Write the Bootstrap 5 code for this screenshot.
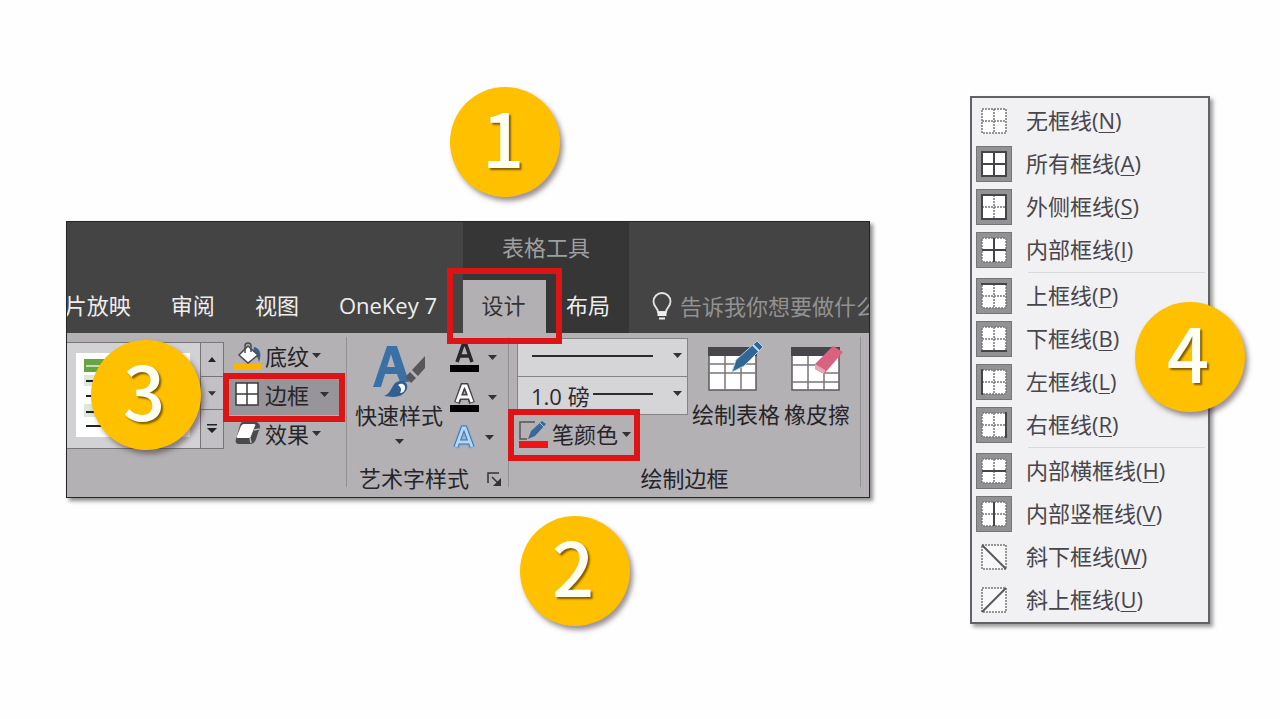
<!DOCTYPE html>
<html lang="zh-CN">
<head>
<meta charset="utf-8">
<meta name="viewport" content="width=device-width, initial-scale=1">
<title>表格工具 · 边框设置</title>
<link href="https://cdn.jsdelivr.net/npm/bootstrap@5.3.0/dist/css/bootstrap.min.css" rel="stylesheet">
<style>
  body { background: #fefefe; color: #262428; font: 22px/32px "Open Sans", "Noto Sans CJK SC", sans-serif; }
  button { color: inherit; background: none; border: 0; padding: 0; line-height: 32px; white-space: nowrap; }
  svg { display: block; flex: none; }
  .stage { padding: 87px 70px 87px 66px; gap: 100px; }

  /* numbered steps */
  .step { width: 110px; height: 110px; border-radius: 50%; background: #ffc000; color: #fffff4;
    font: 500 74px/98px "Noto Sans CJK SC", sans-serif; text-align: center; padding-right: 4px;
    box-shadow: 3px 4px 5px rgba(60,40,50,.5); text-shadow: 2px 2px 2px rgba(90,60,0,.75); z-index: 5; }
  .step-1 { margin: 0 0 24px 384px; }
  .step-2 { margin: 18px 0 0 454px; }
  .step-3 { left: 24px; top: 7px; }
  .step-4 { right: -35px; top: 206px; }
  .marked::after { content: ""; position: absolute; border: 6px solid #dc1416; inset: var(--around); z-index: 3; pointer-events: none; }

  /* ribbon */
  .ribbon { border: 1px solid #252525; box-shadow: 3px 3px 4px rgba(0,0,0,.45); overflow: hidden; }
  .tabs { background: #444; color: #eee; height: 111px; z-index: 2; }
  .tabs-main { gap: 40px; padding: 0 26px 12px 0; }
  .tabs-context { background: #363636; width: 166px; }
  .context-title { color: #a09fa0; line-height: 50px; }
  .tab-on { width: 83px; height: 53px; padding: 0 2px 4px 0; background: #b3b0b4; color: #333; --around: -12px -16px -11px -16px; }
  .tab-next { padding: 0 0 4px 20px; }
  .ask { color: #929292; padding: 0 0 11px 23px; gap: 8px; }
  .tools { background: #b3b1b4; height: 164px; }
  .group { border-right: 1px solid #929094; margin: 4px 0 10px; }
  .group-name { position: absolute; bottom: -7px; }
  .wordart .group-name { left: 12px; }

  .gallery { border: 1px solid #77757a; border-left: 0; height: 107px; background: #d2d1d4; margin-top: 5px; }
  .preview { width: 133px; padding: 10px 10px 11px 9px; }
  .spin { width: 23px; border-left: 1px solid #77757a; background: #c2c0c4; }
  .spin button + button { border-top: 1px solid #77757a; }
  .styles { padding: 0 0 0 10px; width: 122px; }
  .styles button { height: 39px; gap: 3px; padding-bottom: 2px; }
  .framed { background: #979599; --around: -3px -13px -7px -11px; z-index: 2; width: 98px; }
  .framed::before { content: ""; position: absolute; inset: 0 -9px 0 -7px; background: #979599; z-index: -1; }
  .wordart { width: 162px; }
  .quick { width: 86px; margin-left: 9px; }
  .letters { margin-left: 8px; }
  .letters button { height: 40px; gap: 9px; }
  .launcher { position: absolute; right: 6px; bottom: 0; }
  .draw { padding-left: 8px; width: 352px; }
  .combos { width: 171px; padding-top: 1px; }
  .combo { height: 39px; }
  .combo + .combo { margin-top: -1px; }
  .combo select { appearance: none; width: 100%; height: 100%; border: 1px solid #858388; border-radius: 0; background: #d5d4d7; color: #2c2a2e; padding: 0 0 0 13px; line-height: 32px; }
  .combo .drop { position: absolute; right: 6px; top: 15px; pointer-events: none; }
  .combo .rule { position: absolute; right: 35px; top: 17px; height: 2px; background: #2c2a2e; pointer-events: none; }
  .rule-long { width: 121px; }
  .rule-short { width: 60px; }
  .pen { height: 40px; margin: 1px 0 0 2px; padding-bottom: 4px; gap: 4px; width: 116px; --around: -7px -5px -5px -11px; }
  .big { padding-top: 4px; height: 94px; }
  .big svg { height: 52px; margin-bottom: 5px; }

  /* border menu */
  .borders-wrap { margin-top: 9px; width: 240px; flex: none; }
  .borders { background: #f1f0f2; border: 2px solid #626165; padding: 1px 0 1px; color: #48464b; box-shadow: 3px 3px 4px rgba(0,0,0,.4); }
  .borders button { display: flex; align-items: center; gap: 14px; height: 43px; width: 100%; padding-left: 4px; }
  .borders button > span:last-child { padding-bottom: 2px; }
  .borders hr { margin: 1px 3px 1px 56px; border: 0; height: 1px; background: #dad8dc; opacity: 1; }
  .tile { width: 36px; height: 36px; border: 1px solid transparent; padding: 4px; }
  .on .tile { background: #929193; border-color: #757477; }
  .borders u { text-underline-offset: 3px; text-decoration-thickness: 1px; }
</style>
</head>
<body>
<svg width="0" height="0" class="position-absolute" aria-hidden="true">
  <symbol id="drop" viewBox="0 0 9 5"><path d="M0 0h9L4.500 5z" fill="#333136"/></symbol>
  <symbol id="grid" viewBox="0 0 26 26"><path d="M1 1h24v24H1z" fill="#fff"/><path d="M1 1h24v24H1zM13 1v24M1 13h24" fill="none" stroke="#77757a" stroke-width="1.500" stroke-dasharray="2 1"/></symbol>
  <symbol id="sheet" viewBox="0 0 50 46"><path d="M1 1h47v42H1z" fill="#fff" stroke="#5d5b60" stroke-width="1.500"/><path d="M0 0h49v9H0z" fill="#47464a"/></symbol>
</svg>

<main class="stage d-flex align-items-start">
  <section class="flex-grow-1" style="min-width:0">
    <div class="step step-1">1</div>

    <div class="ribbon position-relative">
      <nav class="tabs d-flex position-relative" aria-label="功能区">
        <div class="tabs-main d-flex flex-grow-1 align-items-end justify-content-end overflow-hidden" style="width:0">
          <button>片放映</button><button>审阅</button><button>视图</button><button>OneKey 7</button>
        </div>
        <div class="tabs-context d-flex flex-column justify-content-between flex-shrink-0">
          <div class="context-title text-center">表格工具</div>
          <div class="d-flex align-items-center">
            <button class="tab-on marked position-relative">设计</button>
            <button class="tab-next">布局</button>
          </div>
        </div>
        <button class="ask d-flex align-items-end overflow-hidden" style="width:240px">
          <svg width="20" height="30" viewBox="0 0 20 30"><path d="M6 20c0-4-4.500-5-4.500-10.500a8.500 8.500 0 0 1 17 0C18.500 15 14 16 14 20z" fill="none" stroke="#e4e4e4" stroke-width="1.800"/><path d="M5.500 20h9v4h-9zM7 25.500h6v2H7z" fill="#eee"/></svg>
          <span>告诉我你想要做什么</span>
        </button>
      </nav>

      <div class="tools d-flex position-relative">
        <div class="step step-3 position-absolute">3</div>
        <div class="group d-flex">
          <div class="gallery d-flex">
            <div class="preview">
              <svg width="114" height="84" viewBox="0 0 114 84" aria-label="表格样式"><path d="M0 0h114v84H0z" fill="#fff"/><path d="M8 6h98v13H8z" fill="#67a53f"/><path d="M8 22h98v11H8zM8 51h98v13H8z" fill="#dce8d8"/><path d="M10 13h94" stroke="#e6f2df" stroke-width="1.500"/><path d="M10 28h16M32 28h16M54 28h16M76 28h16M10 43h16M32 43h16M54 43h16M76 43h16M10 59h16M32 59h16M54 59h16M76 59h16M10 73h16M32 73h16M54 73h16M76 73h16" stroke="#222" stroke-width="2"/></svg>
            </div>
            <div class="spin d-flex flex-column">
              <button class="flex-fill d-flex align-items-center justify-content-center" aria-label="上一行"><svg width="8" height="5" viewBox="0 0 8 5"><path d="M0 5h8L4 0z" fill="#222"/></svg></button>
              <button class="flex-fill d-flex align-items-center justify-content-center" aria-label="下一行"><svg width="8" height="5"><use href="#drop"/></svg></button>
              <button class="flex-fill d-flex align-items-center justify-content-center" aria-label="更多"><svg width="10" height="10" viewBox="0 0 10 10"><path d="M0 0h10v1.500H0zM0 4h10L5 9z" fill="#222"/></svg></button>
            </div>
          </div>
          <div class="styles d-flex flex-column align-items-start">
            <button class="d-flex align-items-center">
              <svg width="28" height="28" viewBox="0 0 28 28"><path d="M0 22h27v6H0z" fill="#ffb400"/><path d="M20 5c6 1 8 7 5 15-1-4-2-7-6-8z" fill="#3b6188"/><path d="M14 4L24 13 14 21 5 13z" fill="#fff" stroke="#4a494d" stroke-width="1.500"/><path d="M11 11V4c0-4 6-4 6 0v6" fill="none" stroke="#4a494d" stroke-width="1.500"/></svg>
              <span>底纹</span><svg width="9" height="5"><use href="#drop"/></svg>
            </button>
            <button class="framed marked position-relative d-flex align-items-center">
              <svg width="28" height="26" viewBox="0 0 28 26"><path d="M2 1h22v22H2zM13 1v22M2 12h22" fill="#fff" stroke="#3c3a3f" stroke-width="1.500"/></svg>
              <span>边框</span><svg class="ms-2" width="9" height="5"><use href="#drop"/></svg>
            </button>
            <button class="d-flex align-items-center">
              <svg width="28" height="26" viewBox="0 0 28 26"><path d="M9 1h12c3 0 5 2 5 5l-4 12c-1 3-3 5-6 5H5c-3 0-4-2-3-5L6 4c1-2 1-3 3-3z" fill="#4a494d"/><path d="M10 3h10c1 0 2 1 1 2l-4 10c0 1-1 2-2 2H4c-1 0-2-1-1-2L7 5c1-1 1-2 3-2z" fill="#fff"/><path d="M16 17l1 5M20 9l5-1" stroke="#b9b8bb" stroke-width="1.500"/></svg>
              <span>效果</span><svg width="9" height="5"><use href="#drop"/></svg>
            </button>
          </div>
        </div>

        <div class="group wordart d-flex position-relative flex-shrink-0">
          <button class="quick d-flex flex-column align-items-center justify-content-start">
            <svg class="mt-2" width="54" height="54" viewBox="0 0 54 54"><path fill-rule="evenodd" d="M1 42L15 1h10l12 36h-9l-3-8H13L9 42zM15 22h8L19 9z" fill="#3970a5"/><path d="M12 51c9-3 7-15 17-15 8 0 8 9 2 13-5 4-13 3-19 2z" fill="#315f92"/><path d="M26 40c4-3 8 0 7 4-1 3-3 4-5 4 2-3 1-6-2-8z" fill="#fff"/><path d="M33 32l5-5 6 6-5 5zM40 25l13-14v12l-7 8z" fill="#57565a"/></svg>
            <span>快速样式</span>
            <svg class="mt-2" width="9" height="5"><use href="#drop"/></svg>
          </button>
          <div class="letters d-flex flex-column">
            <button class="d-flex align-items-center" aria-label="文本填充"><svg width="29" height="30" viewBox="0 0 29 30"><path d="M7 20L13 3h3l6 17M9.500 14h10" fill="none" stroke="#29272c" stroke-width="3.500"/><path d="M0 23h29v7H0z"/></svg><svg width="9" height="5"><use href="#drop"/></svg></button>
            <button class="d-flex align-items-center" aria-label="文本轮廓"><svg width="29" height="30" viewBox="0 0 29 30"><path d="M7 21L13 4h3l6 17M10 15h9" fill="none" stroke="#454348" stroke-width="6"/><path d="M7 20L13 4h3l6 16M10 15h9" fill="none" stroke="#fff" stroke-width="3"/><path d="M0 23h29v7H0z"/></svg><svg width="9" height="5"><use href="#drop"/></svg></button>
            <button class="d-flex align-items-center" aria-label="文本效果"><svg width="26" height="28" viewBox="0 0 26 28"><path d="M6 25L13 5h2l7 20M9 19h10" fill="none" stroke="#78afe0" stroke-width="7" stroke-linejoin="round" opacity=".7"/><path d="M6 24L13 5h2l7 19M9 19h10" fill="none" stroke="#3a73aa" stroke-width="5"/><path d="M6 24L13 5h2l7 19M9 19h10" fill="none" stroke="#b4d4ef" stroke-width="3"/></svg><svg width="9" height="5"><use href="#drop"/></svg></button>
          </div>
          <div class="group-name">艺术字样式</div>
          <button class="launcher" aria-label="设置文本效果格式"><svg width="15" height="15" viewBox="0 0 15 15"><path d="M1 11V1h11M5 5l7 7" fill="none" stroke="#333" stroke-width="1.500"/><path d="M14 6v8H6z" fill="#333"/></svg></button>
        </div>

        <div class="group draw d-flex position-relative flex-shrink-0">
          <div class="combos">
            <div class="combo position-relative"><select aria-label="笔样式"><option aria-label="实线"></option></select><span class="rule rule-long"></span><svg class="drop" width="9" height="5"><use href="#drop"/></svg></div>
            <div class="combo position-relative"><select aria-label="笔划粗细"><option>1.0 磅</option></select><span class="rule rule-short"></span><svg class="drop" width="9" height="5"><use href="#drop"/></svg></div>
            <button class="pen marked position-relative d-flex align-items-center">
              <svg width="29" height="28" viewBox="0 0 29 28"><path d="M16 2H1v17h7" fill="none" stroke="#55545a" stroke-width="1.500"/><path d="M9 19l3-8L23 1l4 3-11 12z" fill="#39699a"/><path d="M21 3l4 4" stroke="#a9c4df"/><path d="M0 21h29v7H0z" fill="#ed1516"/></svg>
              <span>笔颜色</span><svg width="9" height="5"><use href="#drop"/></svg>
            </button>
          </div>
          <button class="big d-flex flex-column align-items-center ms-1">
            <svg width="56" viewBox="0 0 56 52"><use href="#sheet" y="6" width="50" height="46"/><path d="M0 23h48M0 32h48M17 15v34M33 15v34" stroke="#77757a" stroke-width="1.500"/><path d="M24 31l4-12L49 0l6 6-19 19z" fill="#2f6797" stroke="#bad0e4"/><path d="M45 4l6 6" stroke="#c6daeb" stroke-width="2"/></svg>
            <span>绘制表格</span>
          </button>
          <button class="big d-flex flex-column align-items-center ms-1">
            <svg width="52" viewBox="0 0 52 52"><use href="#sheet" y="6" width="50" height="46"/><path d="M0 41h48M17 15v34M33 15v34M33 32h15" stroke="#77757a" stroke-width="1.500"/><path d="M0 24h26" stroke="#77757a" stroke-width="1.500"/><path d="M24 23L42 5l10 6-19 22-9-5z" fill="#d8627f"/><path d="M24 23l10 6-1 4-9-5z" fill="#eba5b5"/></svg>
            <span>橡皮擦</span>
          </button>
          <div class="group-name start-0 end-0 text-center">绘制边框</div>
        </div>
      </div>
    </div>

    <div class="step step-2">2</div>
  </section>

  <aside class="borders-wrap position-relative">
    <div class="borders">
      <button><span class="tile"><svg width="26" height="26"><use href="#grid"/></svg></span><span>无框线(<u>N</u>)</span></button>
      <button class="on"><span class="tile"><svg width="26" height="26"><use href="#grid"/><path d="M1 1h24v24H1zM13 1v24M1 13h24" fill="none" stroke="#454449" stroke-width="2"/></svg></span><span>所有框线(<u>A</u>)</span></button>
      <button class="on"><span class="tile"><svg width="26" height="26"><use href="#grid"/><path d="M1 1h24v24H1z" fill="none" stroke="#454449" stroke-width="2"/></svg></span><span>外侧框线(<u>S</u>)</span></button>
      <button class="on"><span class="tile"><svg width="26" height="26"><use href="#grid"/><path d="M13 1v24M1 13h24" stroke="#454449" stroke-width="2"/></svg></span><span>内部框线(<u>I</u>)</span></button>
      <hr>
      <button class="on"><span class="tile"><svg width="26" height="26"><use href="#grid"/><path d="M0 1h26" stroke="#454449" stroke-width="2"/></svg></span><span>上框线(<u>P</u>)</span></button>
      <button class="on"><span class="tile"><svg width="26" height="26"><use href="#grid"/><path d="M0 25h26" stroke="#454449" stroke-width="2"/></svg></span><span>下框线(<u>B</u>)</span></button>
      <button class="on"><span class="tile"><svg width="26" height="26"><use href="#grid"/><path d="M1 0v26" stroke="#454449" stroke-width="2"/></svg></span><span>左框线(<u>L</u>)</span></button>
      <button class="on"><span class="tile"><svg width="26" height="26"><use href="#grid"/><path d="M25 0v26" stroke="#454449" stroke-width="2"/></svg></span><span>右框线(<u>R</u>)</span></button>
      <hr>
      <button class="on"><span class="tile"><svg width="26" height="26"><use href="#grid"/><path d="M1 13h24" stroke="#454449" stroke-width="2"/></svg></span><span>内部横框线(<u>H</u>)</span></button>
      <button class="on"><span class="tile"><svg width="26" height="26"><use href="#grid"/><path d="M13 1v24" stroke="#454449" stroke-width="2"/></svg></span><span>内部竖框线(<u>V</u>)</span></button>
      <button><span class="tile"><svg width="26" height="26"><path d="M1 1h24v24H1z" fill="#f8f8f9" stroke="#77757a" stroke-width="1.500" stroke-dasharray="2 1"/><path d="M1 1l24 24" stroke="#59585c" stroke-width="2"/></svg></span><span>斜下框线(<u>W</u>)</span></button>
      <button><span class="tile"><svg width="26" height="26"><path d="M1 1h24v24H1z" fill="#f8f8f9" stroke="#77757a" stroke-width="1.500" stroke-dasharray="2 1"/><path d="M1 25L25 1" stroke="#59585c" stroke-width="2"/></svg></span><span>斜上框线(<u>U</u>)</span></button>
    </div>
    <div class="step step-4 position-absolute">4</div>
  </aside>
</main>
<script src="https://cdn.jsdelivr.net/npm/bootstrap@5.3.0/dist/js/bootstrap.bundle.min.js"></script>
</body>
</html>
